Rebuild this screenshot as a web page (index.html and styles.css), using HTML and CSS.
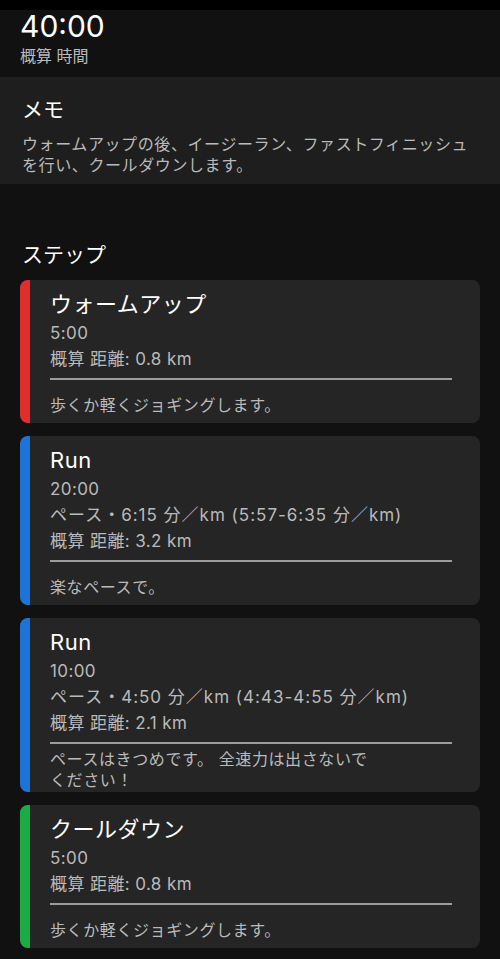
FILE: index.html
```html
<!DOCTYPE html>
<html lang="ja">
<head>
  <meta charset="UTF-8">
  <meta name="viewport" content="width=device-width, initial-scale=1.0">
  <title>ワークアウト</title>
  <link rel="stylesheet" href="styles.css">
</head>
<body>
  <div class="status-strip"></div>

  <header class="summary">
    <div class="summary-time">40:00</div>
    <div class="summary-label">概算 時間</div>
  </header>

  <section class="memo">
    <h2 class="memo-title">メモ</h2>
    <p class="memo-text">ウォームアップの後、イージーラン、ファストフィニッシュを行い、クールダウンします。</p>
  </section>

  <main class="steps">
    <h2 class="steps-title">ステップ</h2>

    <div class="step warmup">
      <div class="step-bar"></div>
      <div class="step-body">
        <div class="step-name">ウォームアップ</div>
        <div class="step-line">5:00</div>
        <div class="step-line">概算 距離: 0.8 km</div>
        <div class="step-divider"></div>
        <div class="step-note">歩くか軽くジョギングします。</div>
      </div>
    </div>

    <div class="step run">
      <div class="step-bar"></div>
      <div class="step-body">
        <div class="step-name">Run</div>
        <div class="step-line">20:00</div>
        <div class="step-line pace">ペース・6:15 分／km (5:57-6:35 分／km)</div>
        <div class="step-line">概算 距離: 3.2 km</div>
        <div class="step-divider"></div>
        <div class="step-note">楽なペースで。</div>
      </div>
    </div>

    <div class="step run">
      <div class="step-bar"></div>
      <div class="step-body">
        <div class="step-name">Run</div>
        <div class="step-line">10:00</div>
        <div class="step-line pace">ペース・4:50 分／km (4:43-4:55 分／km)</div>
        <div class="step-line">概算 距離: 2.1 km</div>
        <div class="step-divider"></div>
        <div class="step-note long">ペースはきつめです。 全速力は出さないで<br>ください！</div>
      </div>
    </div>

    <div class="step cooldown">
      <div class="step-bar"></div>
      <div class="step-body">
        <div class="step-name">クールダウン</div>
        <div class="step-line">5:00</div>
        <div class="step-line">概算 距離: 0.8 km</div>
        <div class="step-divider"></div>
        <div class="step-note">歩くか軽くジョギングします。</div>
      </div>
    </div>
  </main>
</body>
</html>
```

FILE: styles.css
```css
body {
  margin: 0;
  background-color: #111111;
  color: #ffffff;
  font-family: Inter, "Noto Sans CJK JP", sans-serif;
}

.status-strip {
  height: 10px;
  background-color: #000000;
}

/* top summary */
.summary {
  padding: 0 20px 9px;
}

.summary-time {
  font-size: 30px;
  line-height: 32px;
}

.summary-label {
  margin-top: 2px;
  font-size: 16px;
  line-height: 24px;
  color: #bababa;
}

/* memo block */
.memo {
  background-color: #1e1e1e;
  padding: 19px 22px 8px;
}

.memo-title {
  margin: 0;
  font-size: 21px;
  font-weight: normal;
  line-height: 28px;
}

.memo-text {
  margin: 10px 0 0;
  font-size: 16px;
  letter-spacing: 0.6px;
  line-height: 21px;
  color: #bababa;
}

/* steps */
.steps {
  padding: 57px 20px 0;
}

.steps-title {
  margin: 0 0 11px 2px;
  font-size: 21px;
  font-weight: normal;
  line-height: 28px;
}

.step {
  display: flex;
  background-color: #252525;
  border-radius: 8px;
  overflow: hidden;
  margin-bottom: 13px;
}

.step-bar {
  width: 10px;
  flex-shrink: 0;
}

.warmup .step-bar {
  background-color: #e22d2d;
}

.run .step-bar {
  background-color: #1d74d8;
}

.cooldown .step-bar {
  background-color: #1aab45;
}

.step-body {
  flex: 1;
  padding: 8px 28px 7px 20px;
}

.step-name {
  font-size: 22px;
  letter-spacing: 0.5px;
  line-height: 32px;
}

.step-line {
  font-size: 17px;
  letter-spacing: 0.4px;
  line-height: 26px;
  color: #bababa;
}

.step-line.pace {
  letter-spacing: 1px;
}

.step-divider {
  height: 2px;
  margin-top: 6px;
  background-color: #9c9c9c;
}

.step-note {
  margin-top: 14px;
  font-size: 16px;
  letter-spacing: 0.6px;
  line-height: 22px;
  color: #bababa;
}

.step-note.long {
  margin-top: 5px;
  margin-bottom: -6px;
  line-height: 21px;
}
```
